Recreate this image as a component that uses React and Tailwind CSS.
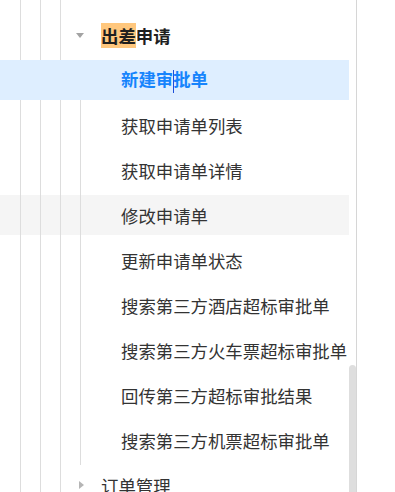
import { Fragment } from 'react'

// tree rows for the 出差申请 section
const rows = [
  { id: 'trip', label: '出差申请', level: 3, caret: 'down', mark: '出差', bold: true },
  { id: 'new', label: '新建审批单', level: 4, selected: true },
  { id: 'list', label: '获取申请单列表', level: 4 },
  { id: 'detail', label: '获取申请单详情', level: 4 },
  { id: 'edit', label: '修改申请单', level: 4, hover: true },
  { id: 'status', label: '更新申请单状态', level: 4 },
  { id: 'hotel', label: '搜索第三方酒店超标审批单', level: 4 },
  { id: 'train', label: '搜索第三方火车票超标审批单', level: 4 },
  { id: 'result', label: '回传第三方超标审批结果', level: 4 },
  { id: 'flight', label: '搜索第三方机票超标审批单', level: 4 },
  { id: 'order', label: '订单管理', level: 3, caret: 'right' },
]

const font = { fontFamily: '"Noto Sans CJK SC", "Noto Sans", sans-serif' }

// indent guides: first 20px blank, then one bordered unit per level
const Guides = ({ level, hidden }) => (
  <>
    <div className="w-[20px] shrink-0" />
    {Array.from({ length: level }).map((_, i) => (
      <div
        key={i}
        className={
          'w-[20px] h-full shrink-0 border-l ' +
          (hidden ? 'border-transparent' : 'border-[#dddddd]')
        }
      />
    ))}
  </>
)

const Caret = ({ dir }) => (
  <div className="w-[20px] -ml-[10px] shrink-0 flex items-center justify-center">
    {dir === 'down' ? (
      <svg width="8" height="5" viewBox="0 0 8 5">
        <path d="M0 0 L8 0 L4 5 Z" fill="#a3a3a3" />
      </svg>
    ) : (
      <svg width="5" height="8" viewBox="0 0 5 8" className="ml-[2px]">
        <path d="M0 0 L5 4 L0 8 Z" fill="#b5b5b5" />
      </svg>
    )}
  </div>
)

const Label = ({ row }) => {
  if (row.mark) {
    const rest = row.label.slice(row.mark.length)
    return (
      <span>
        <span className="bg-[#ffc77d]">{row.mark}</span>
        {rest}
      </span>
    )
  }
  if (row.selected) {
    // text cursor sits between 审 and 批
    return (
      <span>
        新建审
        <span className="inline-block w-px h-[23px] -mr-px align-middle bg-[#1d4ed8]" />
        批单
      </span>
    )
  }
  return <span>{row.label}</span>
}

const TreeRow = ({ row }) => {
  const bg = row.selected ? 'bg-[#deeeff]' : row.hover ? 'bg-[#f5f5f5]' : ''
  const text = row.selected
    ? 'text-[#1684fc] font-bold'
    : row.bold
      ? 'text-[#1f1f1f] font-bold'
      : 'text-[#333333]'

  return (
    <div className="flex flex-col shrink-0">
      <div className={'flex h-[40px] shrink-0 items-stretch ' + bg}>
        <Guides level={row.level} hidden={row.selected} />
        {row.caret ? <Caret dir={row.caret} /> : null}
        <div
          className={
            'flex items-center whitespace-nowrap text-[17.4px] leading-[23px] ' +
            (row.caret ? 'ml-[11px] ' : 'ml-[21px] ') +
            text
          }
        >
          <Label row={row} />
        </div>
      </div>
      <div className="flex h-[5px] shrink-0">
        <Guides level={row.level} />
      </div>
    </div>
  )
}

export default function App() {
  return (
    <div className="w-[395px] h-[492px] bg-white overflow-hidden" style={font}>
      <div className="flex h-full w-[357px] border-r border-[#d6d6d6]">
        <div className="w-[349px] flex flex-col">
          <div className="flex h-[15px] shrink-0">
            <Guides level={3} />
          </div>
          {rows.map((row) => (
            <Fragment key={row.id}>
              <TreeRow row={row} />
            </Fragment>
          ))}
          <div className="flex flex-1">
            <Guides level={3} />
          </div>
        </div>
        {/* scrollbar */}
        <div className="w-[7px] flex flex-col">
          <div className="h-[365px] shrink-0" />
          <div className="flex-1 rounded-t-[4px] bg-[#dedede]" />
        </div>
      </div>
    </div>
  )
}
